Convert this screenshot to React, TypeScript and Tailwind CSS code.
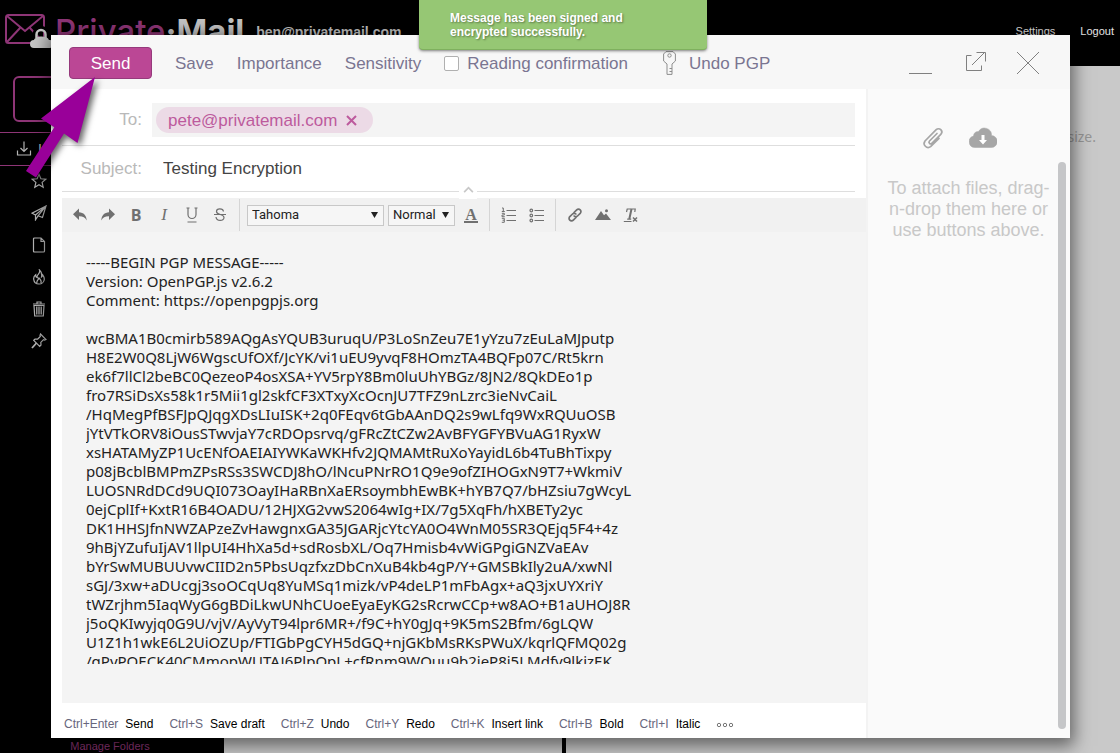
import React from "react";

const MESSAGE = `-----BEGIN PGP MESSAGE-----
Version: OpenPGP.js v2.6.2
Comment: https://openpgpjs.org

wcBMA1B0cmirb589AQgAsYQUB3uruqU/P3LoSnZeu7E1yYzu7zEuLaMJputp
H8E2W0Q8LjW6WgscUfOXf/JcYK/vi1uEU9yvqF8HOmzTA4BQFp07C/Rt5krn
ek6f7llCl2beBC0QezeoP4osXSA+YV5rpY8Bm0luUhYBGz/8JN2/8QkDEo1p
fro7RSiDsXs58k1r5Mii1gl2skfCF3XTxyXcOcnJU7TFZ9nLzrc3ieNvCaiL
/HqMegPfBSFJpQJqgXDsLIuISK+2q0FEqv6tGbAAnDQ2s9wLfq9WxRQUuOSB
jYtVTkORV8iOusSTwvjaY7cRDOpsrvq/gFRcZtCZw2AvBFYGFYBVuAG1RyxW
xsHATAMyZP1UcENfOAEIAIYWKaWKHfv2JQMAMtRuXoYayidL6b4TuBhTixpy
p08jBcblBMPmZPsRSs3SWCDJ8hO/lNcuPNrRO1Q9e9ofZIHOGxN9T7+WkmiV
LUOSNRdDCd9UQI073OayIHaRBnXaERsoymbhEwBK+hYB7Q7/bHZsiu7gWcyL
0ejCplIf+KxtR16B4OADU/12HJXG2vwS2064wIg+IX/7g5XqFh/hXBETy2yc
DK1HHSJfnNWZAPzeZvHawgnxGA35JGARjcYtcYA0O4WnM05SR3QEjq5F4+4z
9hBjYZufuIjAV1llpUI4HhXa5d+sdRosbXL/Oq7Hmisb4vWiGPgiGNZVaEAv
bYrSwMUBUUvwCIID2n5PbsUqzfxzDbCnXuB4kb4gP/Y+GMSBkIly2uA/xwNl
sGJ/3xw+aDUcgj3soOCqUq8YuMSq1mizk/vP4deLP1mFbAgx+aQ3jxUYXriY
tWZrjhm5IaqWyG6gBDiLkwUNhCUoeEyaEyKG2sRcrwCCp+w8AO+B1aUHOJ8R
j5oQKIwyjq0G9U/vjV/AyVyT94lpr6MR+/f9C+hY0gJq+9K5mS2Bfm/6gLQW
U1Z1h1wkE6L2UiOZUp/FTIGbPgCYH5dGQ+njGKbMsRKsPWuX/kqrlQFMQ02g
/gPyPOECK40CMmopWUTAJ6PlpOpL+cfRnm9WQuu9b2jeP8j5LMdfy9lkjzEK`;

const SHORTCUTS = [
  ["Ctrl+Enter", "Send"],
  ["Ctrl+S", "Save draft"],
  ["Ctrl+Z", "Undo"],
  ["Ctrl+Y", "Redo"],
  ["Ctrl+K", "Insert link"],
  ["Ctrl+B", "Bold"],
  ["Ctrl+I", "Italic"],
];

type IconProps = { children: React.ReactNode; className?: string; box?: string };

function Icon({ children, className = "size-4", box = "0 0 16 16" }: IconProps) {
  return (
    <svg
      viewBox={box}
      className={`shrink-0 ${className}`}
      fill="none"
      stroke="currentColor"
      strokeWidth="1.2"
      aria-hidden="true"
    >
      {children}
    </svg>
  );
}

const FOLDERS = [
  {
    name: "Starred",
    art: <path d="M8 1.3l1.9 4.5 4.9.4-3.7 3.2 1.1 4.8L8 11.7l-4.2 2.5 1.1-4.8L1.2 6.2l4.9-.4z" />,
  },
  {
    name: "Sent",
    art: <path d="M15 1L1 8.2l3.5 1.8L15 1l-3.5 11.5-4.3-1.8L15 1M4.5 10v4.8l2.7-4.1" />,
  },
  { name: "Drafts", art: <path d="M2.5 2q0-1 1-1h6.5l3.500 3.500V14q0 1-1 1h-9q-1 0-1-1zM10 1v3.500h3.500" /> },
  {
    name: "Spam",
    art: (
      <path d="M8.500 1c.8 2.500-.7 3.700-1.700 5C6 7 6 8 6.300 8.600 5 8.200 4.600 7 4.700 5.800 3 7.200 2.500 8.800 2.700 10.200 3 13 5.200 15 8 15s5.200-2 5.300-4.800c.1-2-.8-3.300-1.600-4.400-.2 1-.5 1.700-1.200 2.200C11 5 10.300 2.500 8.500 1zM6 14c-.8-2.500 1.500-3 2-5 1.500 1.500 2.800 3.500 1.800 5.200" />
    ),
  },
  {
    name: "Trash",
    art: (
      <>
        <path d="M2 3h12M6 3V1h4v2M3 4.500l.7 10.500h8.600L13 4.500z" />
        <path d="M5.800 5.500v8M8 5.500v8M10.200 5.500v8" strokeWidth="1.300" />
      </>
    ),
  },
  {
    name: "Pinned",
    art: (
      <>
        <path d="M9.500 1l5.500 5.500-1.500.5-1-.3-2.700 2.700.2 2.600-1.300 1.300-6-6 1.300-1.300 2.600.2 2.700-2.700-.3-1z" />
        <path d="M5.500 10L1 15" strokeWidth="1.800" />
      </>
    ),
  },
];

function Backdrop() {
  return (
    <div className="flex min-h-screen flex-col" aria-hidden="true">
      <header className="flex h-[66px] items-start justify-between bg-black px-1 text-white">
        <div className="flex">
          <svg viewBox="0 0 50 40" className="mt-2.5 h-10 w-[50px]" fill="none">
            <rect x="2" y="5" width="38" height="28" rx="2.500" stroke="#8e3576" strokeWidth="2" />
            <path d="M3 6l18 15L39 6M3 32l13-14M39 32L26 18" stroke="#8e3576" strokeWidth="2" />
            <path d="M31 28v-3.500a6 6 0 0 1 12 0V28" stroke="#000" strokeWidth="5" />
            <path d="M32.500 28v-3.500a4.500 4.500 0 0 1 9 0V28" stroke="#c8c8c8" strokeWidth="2.500" />
            <path d="M30 38a4 4 0 0 1 0-8c1-4 13-5 15 0a4 4 0 0 1 1 8z" fill="#c8c8c8" />
          </svg>
          <span className="mt-[13px] ml-px font-['Inter',sans-serif] text-[33px] leading-9 font-medium text-[#8e3576]">
            Private<span className="font-bold text-[#c4c4c4]">·Mail</span>
          </span>
          <span className="mt-6 ml-3 text-sm leading-4 font-bold text-[#c4c4c4]">ben@privatemail.com</span>
        </div>
        <nav className="mt-[23px] flex gap-[25px] pr-0.5 text-[11px] leading-4 text-[#e4e4e4]">
          <a href="#settings">Settings</a>
          <a href="#logout">Logout</a>
        </nav>
      </header>
      <div className="flex grow">
        <aside className="flex w-56 flex-col bg-black text-[#b5b5b5]">
          <button className="mx-[13px] mt-2.5 h-[46px] rounded-md border-2 border-[#8e3576]" />
          <a href="#inbox" className="mt-2.5 flex h-[34px] items-center gap-[6px] border-y border-[#8e3576] px-4 text-sm">
            <Icon>
              <path d="M1.500 9.500V14h13V9.500M8 .5v10M4.500 7L8 10.500 11.500 7" />
            </Icon>
            Inbox
          </a>
          <ul className="-mt-px flex flex-col pl-[31px]">
            {FOLDERS.map((f) => (
              <li key={f.name} className="flex h-8 items-center">
                <Icon>{f.art}</Icon>
              </li>
            ))}
          </ul>
          <a href="#folders" className="mt-auto pr-1 text-center text-[11px] leading-[14px] text-[#8e3576]">
            Manage Folders
          </a>
        </aside>
        <section className="w-[342px] border-r-4 border-black bg-[#c9c9c9]" />
        <section className="grow bg-[#c9c9c9] pt-[63px] pr-6 text-right font-['Noto_Sans',sans-serif] text-sm leading-4 text-[#959595]">
          size.
        </section>
      </div>
    </div>
  );
}

function Tool({ label, children }: { label: string; children: React.ReactNode }) {
  return (
    <button type="button" aria-label={label} className="flex h-8 w-7 items-center justify-center">
      {children}
    </button>
  );
}

function Picker({ label, value, width }: { label: string; value: string; width: string }) {
  return (
    <span className={`relative flex ${width}`}>
      <select
        aria-label={label}
        defaultValue={value}
        className="h-[21px] w-full appearance-none border border-[#c8c8c8] bg-[#f6f6f6] pl-1 font-['Roboto',sans-serif] text-[13px] leading-4 text-[#222]"
      >
        <option>{value}</option>
      </select>
      <svg viewBox="0 0 7 6" className="pointer-events-none absolute top-[7px] right-1.5 h-1.5 w-[7px]" fill="#222">
        <path d="M0 0h7L3.500 6z" />
      </svg>
    </span>
  );
}

function FormatBar() {
  return (
    <div className="flex h-[34px] items-center bg-[#f1f1f1] pl-1 text-[#707070]">
      <div className="flex">
        <Tool label="Undo">
          <Icon>
            <path d="M7 1.500v3.700c4.500.2 7.500 3 7.700 8.300-1.500-3.200-4-4.400-7.700-4.300V13L1 7.200z" fill="currentColor" stroke="none" />
          </Icon>
        </Tool>
        <Tool label="Redo">
          <Icon>
            <path d="M9 1.500v3.700c-4.500.2-7.500 3-7.700 8.300 1.500-3.200 4-4.400 7.700-4.300V13l6-5.800z" fill="currentColor" stroke="none" />
          </Icon>
        </Tool>
        <Tool label="Bold">
          <b className="font-['Open_Sans',sans-serif] text-base leading-5">B</b>
        </Tool>
        <Tool label="Italic">
          <i className="font-['Liberation_Serif',serif] text-[17px] leading-5">I</i>
        </Tool>
        <Tool label="Underline">
          <Icon>
            <path d="M4 1v6.500a4 4 0 0 0 8 0V1M2.500 1h3M10.500 1h3M3.500 15h9" />
          </Icon>
        </Tool>
        <Tool label="Strikethrough">
          <Icon>
            <path d="M11.500 4.500C11 1 4.500 1.200 4.500 4.500c0 4 7.500 2 7.500 6 0 4-7.500 4-8-.5M2 7.500h12" />
          </Icon>
        </Tool>
      </div>
      <span className="ml-[5px] h-8 w-px bg-[#d5d5d5]" />
      <div className="flex items-center gap-1 pl-[7px]">
        <Picker label="Font" value="Tahoma" width="w-[137px]" />
        <Picker label="Text size" value="Normal" width="w-[67px]" />
      </div>
      <div className="flex pl-0.5">
        <Tool label="Text color">
          <span className="border-b-2 border-current px-px font-['Liberation_Serif',serif] text-base leading-[13px] font-bold">
            A
          </span>
        </Tool>
      </div>
      <span className="ml-1 h-8 w-px bg-[#d5d5d5]" />
      <div className="flex pl-[5px]">
        <Tool label="Numbered list">
          <Icon>
            <path d="M5.500 3.500H15M5.500 8.500H15M5.500 13.500H15" strokeWidth="1" />
            <path d="M1 1h1.300v3.500M.8 4.500h3M.8 6.300h2.500v1.700H1v1.700h2.800M.8 11.300h2.500v4H.8M1.500 13.200h1.800" strokeWidth="1" />
          </Icon>
        </Tool>
        <Tool label="Bulleted list">
          <Icon>
            <path d="M5.500 3.500H15M5.500 8.500H15M5.500 13.500H15" strokeWidth="1" />
            <circle cx="2.300" cy="3.500" r="1.300" />
            <circle cx="2.300" cy="8.500" r="1.300" />
            <circle cx="2.300" cy="13.500" r="1.300" />
          </Icon>
        </Tool>
      </div>
      <span className="ml-1 h-8 w-px bg-[#d5d5d5]" />
      <div className="flex pl-[5px]">
        <Tool label="Insert link">
          <Icon>
            <g strokeWidth="1.700" strokeLinecap="round">
              <path d="M7 5.500l2.700-2.700a2.400 2.400 0 0 1 3.500 3.500L10.500 9a2.400 2.400 0 0 1-3.400 0" />
              <path d="M9 10.500l-2.700 2.700a2.400 2.400 0 0 1-3.500-3.500L5.500 7a2.400 2.400 0 0 1 3.400 0" />
            </g>
          </Icon>
        </Tool>
        <Tool label="Insert image">
          <Icon>
            <path d="M0 13L6 4l3 4.200 2-1.700 5 6.500z" fill="currentColor" stroke="none" />
            <circle cx="11.500" cy="3.800" r="1.500" fill="currentColor" stroke="none" />
          </Icon>
        </Tool>
        <Tool label="Clear formatting">
          <Icon>
            <path d="M3.500 5l.7-3h8l-.4 3" />
            <path d="M8.500 2L6.300 12" strokeWidth="2" />
            <path d="M4.200 12.200h4M.8 14.500h7.700" />
            <path d="M10 10.500l4 4M14 10.500l-4 4" strokeWidth="1.500" />
          </Icon>
        </Tool>
      </div>
    </div>
  );
}

function Toolbar() {
  return (
    <div className="flex h-[54px] items-center bg-[#f7f7f7] pt-0.5 pl-[18px] pr-[30px] text-[17px] leading-5 text-[#7a7591]">
      <div className="flex items-center gap-[23px]">
        <button type="button" className="h-8 w-[83px] rounded border border-[#963a7c] bg-[#bb4795] pt-0.5 text-white">
          Send
        </button>
        <button type="button" className="pt-0.5">
          Save
        </button>
        <button type="button" className="pt-0.5">
          Importance
        </button>
        <button type="button" className="pt-0.5">
          Sensitivity
        </button>
        <label className="flex items-center gap-2">
          <input type="checkbox" className="size-[15px] appearance-none rounded-xs border border-[#b0b0b0] bg-white" />
          <span className="pt-0.5">Reading confirmation</span>
        </label>
      </div>
      <button type="button" className="ml-[34px] flex items-center gap-3">
        <Icon className="h-6 w-[15px] text-[#8d8d8d]" box="0 0 15 24">
          <path d="M4 .6h7l2.400 2.400v7L10 13v10.400H5V13L1.600 10V3zM10 17.500H7.500M10 20.500H7.500" strokeWidth="1" />
          <circle cx="7.500" cy="4.500" r="1.700" strokeWidth="1" />
        </Icon>
        <span className="pt-0.5">Undo PGP</span>
      </button>
      <div className="ml-auto flex items-center gap-[30px] text-[#808080]">
        <button type="button" aria-label="Minimize">
          <Icon className="size-6" box="0 0 24 24">
            <path d="M1 22.500h23" strokeWidth="1" />
          </Icon>
        </button>
        <button type="button" aria-label="Open in new window">
          <Icon className="size-6" box="0 0 24 24">
            <path d="M9.500 4.500h-5v15h15v-5M10 14L23 1M14.500 1.500h9v9" strokeWidth="1" />
          </Icon>
        </button>
        <button type="button" aria-label="Close">
          <Icon className="size-6" box="0 0 24 24">
            <path d="M1 1l22 22M23 1L1 23" strokeWidth="1" />
          </Icon>
        </button>
      </div>
    </div>
  );
}

function AttachmentPane() {
  return (
    <aside className="flex w-[204px] shrink-0 border-l-2 border-[#f3f3f3] bg-[#fafafa] pr-1">
      <div className="grow pt-[37px] pl-[11px] text-center">
        <div className="flex justify-center gap-6 pr-5 text-[#a6a6a6]">
          <button type="button" aria-label="Attach file">
            <Icon className="size-6" box="0 0 24 24">
              <path
                d="M16 7.500L8.500 15a1.600 1.600 0 0 0 2.300 2.300l9-9a3.200 3.200 0 0 0-4.600-4.600L4 15a4 4 0 0 0 5.600 5.600L18 12.300"
                strokeWidth="1.700"
                strokeLinecap="round"
              />
            </Icon>
          </button>
          <button type="button" aria-label="Attach from cloud">
            <Icon className="h-6 w-7" box="0 0 28 24">
              <path
                d="M6 21.500a5.800 5.800 0 0 1-1.500-11.400A5 5 0 0 1 9.500 5.500 7 7 0 0 1 22.500 9.500 6 6 0 0 1 22 21.500z"
                fill="currentColor"
                stroke="currentColor"
                strokeWidth="0.500"
              />
              <path d="M12.500 9h3v5H18l-4 4.500L10 14h2.500z" fill="#fff" stroke="none" />
            </Icon>
          </button>
        </div>
        <p className="mt-7 text-lg leading-[21px] text-[#c8c8c8]">
          To attach files, drag-
          <br />
          n-drop them here or
          <br />
          use buttons above.
        </p>
      </div>
      <div className="mt-[73px] mb-[9px] w-2 shrink-0 rounded-full bg-[#c5c6c8]" />
    </aside>
  );
}

function Composer() {
  return (
    <form className="flex grow flex-col bg-white shadow-[0_4px_16px_4px_rgba(0,0,0,0.5)]" onSubmit={(e) => e.preventDefault()}>
      <Toolbar />
      <div className="flex grow">
        <div className="flex grow flex-col pl-[11px]">
          <div className="mr-[11px] flex h-[57px] items-center border-b border-[#dedede] pt-[5px]">
            <label htmlFor="to" className="w-20 text-right text-[17px] text-[#b9b9b9]">
              To:
            </label>
            <div className="ml-2.5 flex h-[34px] grow items-center bg-[#f4f4f4] pl-1">
              <span className="flex h-[26px] items-center gap-2 rounded-full bg-[#ecdae6] pt-0.5 pr-[15px] pl-3 text-[17px] text-[#bd5a9d]">
                pete@privatemail.com
                <button type="button" aria-label="Remove recipient">
                  <Icon className="size-[13px]" box="0 0 13 13">
                    <path d="M2 2l9 9M11 2l-9 9" strokeWidth="2" />
                  </Icon>
                </button>
              </span>
              <input id="to" className="min-w-0 grow bg-transparent text-[17px] outline-none" />
            </div>
          </div>
          <div className="relative mr-[11px] flex h-[46px] items-center border-b border-[#dedede]">
            <label htmlFor="subject" className="w-20 text-right text-[17px] text-[#b9b9b9]">
              Subject:
            </label>
            <input
              id="subject"
              defaultValue="Testing Encryption"
              className="ml-[21px] min-w-0 grow text-[17px] text-[#444] outline-none"
            />
            <button
              type="button"
              aria-label="Collapse headers"
              className="absolute -bottom-2 left-[397px] flex h-4 w-[18px] items-center justify-center bg-white pb-1 text-[#c8c8c8]"
            >
              <Icon className="h-[7px] w-[11px]" box="0 0 12 8">
                <path d="M1 7l5-5 5 5" strokeWidth="2" />
              </Icon>
            </button>
          </div>
          <div className="mt-[6px] flex grow flex-col bg-[#f4f4f4]">
            <FormatBar />
            <textarea
              aria-label="Message"
              defaultValue={MESSAGE}
              wrap="off"
              className="mt-[21px] mr-6 mb-[39px] ml-6 h-[411px] grow resize-none overflow-hidden bg-transparent font-['Noto_Sans',sans-serif] text-[15px] leading-[19px] text-[#222] outline-none"
            />
          </div>
          <div className="flex h-[35px] items-center gap-4 pt-1.5 pl-0.5 text-xs leading-4">
            {SHORTCUTS.map(([keys, action]) => (
              <span key={keys} className="flex gap-[7px]">
                <kbd className="font-['Liberation_Sans',sans-serif] text-[#67667c]">{keys}</kbd>
                <span className="text-black">{action}</span>
              </span>
            ))}
            <button type="button" aria-label="More shortcuts">
              <Icon className="h-2 w-[18px] text-[#777]" box="0 0 18 8">
                <circle cx="3" cy="5" r="1.700" strokeWidth="1" />
                <circle cx="9" cy="5" r="1.700" strokeWidth="1" />
                <circle cx="15" cy="5" r="1.700" strokeWidth="1" />
              </Icon>
            </button>
          </div>
        </div>
        <AttachmentPane />
      </div>
    </form>
  );
}

export default function App() {
  return (
    <div className="relative min-h-screen overflow-hidden font-['Liberation_Sans',sans-serif]">
      <Backdrop />
      <div className="absolute inset-0 flex pt-[35px] pr-[50px] pb-[15px] pl-[51px]">
        <Composer />
      </div>
      <div
        role="status"
        className="absolute top-0 left-[419px] h-[50px] w-72 rounded-b border-b border-[#7fb05e] bg-[#96c774] pt-[11px] pl-[31px] text-xs leading-[14px] font-bold text-white shadow-[0_1px_3px_rgba(0,0,0,0.5)] [text-shadow:1px_1px_2px_rgba(0,0,0,0.4)]"
      >
        Message has been signed and
        <br />
        encrypted successfully.
      </div>
      <svg
        viewBox="0 0 80 115"
        className="pointer-events-none absolute top-[70px] left-5 h-[115px] w-20 overflow-visible drop-shadow-[3px_3px_3px_rgba(0,0,0,0.6)]"
        aria-hidden="true"
      >
        <path d="M75 7L21 48.500 34.300 57.300 6 101l10 6.500L44 63.500 57.500 73z" fill="#990099" />
      </svg>
    </div>
  );
}
